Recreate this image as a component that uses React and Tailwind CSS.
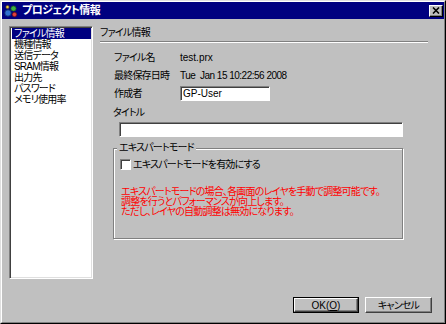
import React from 'react';

const items = ['ファイル情報', '機種情報', '送信データ', 'SRAM情報', '出力先', 'パスワード', 'メモリ使用率'];

const AppIcon = () => (
  <svg width="14" height="14" viewBox="0 0 14 14">
    <circle cx="4" cy="9" r="3.2" fill="#2f6fd0" stroke="#10306a" strokeWidth="0.8" />
    <circle cx="9.5" cy="4.5" r="2.6" fill="#3cb043" stroke="#1a5c20" strokeWidth="0.8" />
    <circle cx="10.5" cy="10.5" r="2.2" fill="#e04040" stroke="#6a1010" strokeWidth="0.8" />
    <circle cx="3.5" cy="3" r="1.6" fill="#f0d040" stroke="#705a10" strokeWidth="0.6" />
  </svg>
);

const App = () => {
  return (
    <div className="w-[446px] h-[324px] bg-[#c0c0c0] border border-t-[#dfdfdf] border-l-[#dfdfdf] border-r-black border-b-black font-['Liberation_Sans','Noto_Sans_CJK_JP',sans-serif] [font-feature-settings:'palt'] text-[10px] tracking-[-0.8px] text-black overflow-hidden">
      <div className="w-full h-full flex flex-col border border-t-white border-l-white border-r-[#808080] border-b-[#808080]">
        {/* Title bar */}
        <div className="h-[17px] bg-[#000080] flex items-center pl-[2px] pr-[1px]">
          <AppIcon />
          <span className="ml-[4px] text-white font-bold text-[11px] leading-[17px] tracking-[-0.6px]">プロジェクト情報</span>
          <div className="ml-auto w-[14px] h-[12px] bg-[#c0c0c0] border border-t-white border-l-white border-r-black border-b-black shadow-[inset_-1px_-1px_#808080] flex items-center justify-center">
            <svg width="8" height="7" viewBox="0 0 8 7">
              <path d="M1 0.5 L7 6.5 M7 0.5 L1 6.5" stroke="black" strokeWidth="1.6" />
            </svg>
          </div>
        </div>

        <div className="flex pt-[7px]">
          {/* List */}
          <div className="ml-[7px] w-[84px] h-[253px] bg-white border border-t-[#808080] border-l-[#808080] border-r-white border-b-white shadow-[inset_1px_1px_#404040,inset_-1px_-1px_#dfdfdf] p-[1px] pl-[2px] pt-[1px]">
            {items.map((item, i) => (
              <div
                key={item}
                className={`h-[11px] leading-[11px] pl-[2px] w-[79px] ${i === 0 ? 'bg-[#000080] text-white' : 'text-black'}`}
              >
                {item}
              </div>
            ))}
          </div>

          {/* Panel */}
          <div className="ml-[7px] flex flex-col">
            <div className="h-[14px] leading-[14px]">ファイル情報</div>
            <div className="mt-[1px] w-[328px] border-t border-t-[#808080] border-b border-b-white" />

            <div className="mt-[5px] flex flex-col pl-[14px]">
              <div className="h-[18px] flex items-center">
                <span className="w-[66px]">ファイル名</span>
                <span className="tracking-normal">test.prx</span>
              </div>
              <div className="h-[18px] flex items-center">
                <span className="w-[66px]">最終保存日時</span>
                <span className="whitespace-pre tracking-[-0.5px]">Tue  Jan 15 10:22:56 2008</span>
              </div>
              <div className="h-[18px] flex items-center">
                <span className="w-[66px]">作成者</span>
                <div className="w-[90px] h-[15px] bg-white border border-t-[#808080] border-l-[#808080] border-r-white border-b-white shadow-[inset_1px_1px_#404040] pl-[2px] leading-[13px] tracking-normal">
                  GP-User
                </div>
              </div>
            </div>

            <div className="mt-[4px] pl-[13px] h-[14px] leading-[14px]">タイトル</div>
            <div className="mt-[2px] ml-[19px] w-[284px] h-[15px] bg-white border border-t-[#808080] border-l-[#808080] border-r-white border-b-white shadow-[inset_1px_1px_#404040]" />

            {/* Group box */}
            <div className="relative mt-[11px] ml-[13px] w-[290px] h-[91px] border border-[#808080] shadow-[inset_1px_1px_white,1px_1px_white] pl-[6px] pt-[9px]">
              <span className="absolute left-[3px] top-[-7px] px-[2px] bg-[#c0c0c0] leading-[12px]">エキスパートモード</span>
              <div className="flex items-center h-[12px]">
                <div className="w-[11px] h-[11px] bg-white border border-t-[#808080] border-l-[#808080] border-r-white border-b-white shadow-[inset_1px_1px_#404040]" />
                <span className="ml-[2px]">エキスパートモードを有効にする</span>
              </div>
              <div className="mt-[17px] text-[#ff0000] leading-[10px] pl-[1px] whitespace-nowrap">
                <div>エキスパートモードの場合、各画面のレイヤを手動で調整可能です。</div>
                <div>調整を行うとパフォーマンスが向上します。</div>
                <div>ただし、レイヤの自動調整は無効になります。</div>
              </div>
            </div>
          </div>
        </div>

        {/* Buttons */}
        <div className="mt-auto flex justify-end gap-[6px] pr-[12px] pb-[9px]">
          <div className="w-[66px] h-[16px] border border-black">
            <div className="w-full h-full flex items-center justify-center border border-t-white border-l-white border-r-[#404040] border-b-[#404040] shadow-[inset_-1px_-1px_#808080] tracking-normal">
              OK(<span className="underline">O</span>)
            </div>
          </div>
          <div className="w-[67px] h-[16px] flex items-center justify-center border border-t-white border-l-white border-r-[#404040] border-b-[#404040] shadow-[inset_-1px_-1px_#808080]">
            キャンセル
          </div>
        </div>
      </div>
    </div>
  );
};

export default App;
